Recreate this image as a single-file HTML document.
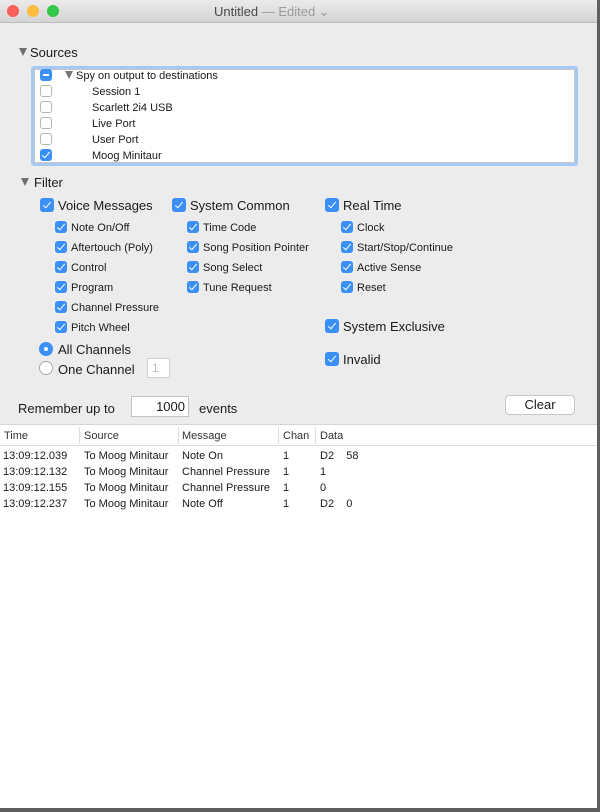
<!DOCTYPE html><html><head><style>
body{margin:0;width:600px;height:812px;background:#5f5f5f;position:relative;overflow:hidden;font-family:"Liberation Sans",sans-serif;color:#1a1a1a}
.a{position:absolute;white-space:nowrap}
#win{position:absolute;left:0;top:0;width:597px;height:808px;background:#ececec;overflow:hidden}
.cb{position:absolute;width:12px;height:12px;border-radius:3px;background:#3b8ff5;}
.cb::after{content:"";position:absolute;left:4px;top:1px;width:3px;height:7px;border:solid #fff;border-width:0 1.5px 1.5px 0;transform:rotate(40deg)}
.cb.b{width:14px;height:14px}
.cb.b::after{left:5px;top:2px;height:7px}
.cb.e{background:#fff;border:1px solid #b5b5b5;width:10px;height:10px}
.cb.e::after,.cb.m::after{display:none}
.s{font-size:11px;margin-top:2px}.l{font-size:13px;margin-top:1px}
.tri{width:0;height:0;border-left:4.5px solid transparent;border-right:4.5px solid transparent;border-top:8px solid #6f6f6f}
</style></head><body>
<div id="win">
<div class="a" style="left:0;top:0;width:597px;height:22px;background:linear-gradient(#ebebeb,#d5d5d5);border-bottom:1px solid #bdbdbd"></div>
<div class="a" style="left:7px;top:5px;width:12px;height:12px;border-radius:50%;background:#fc605b"></div>
<div class="a" style="left:27px;top:5px;width:12px;height:12px;border-radius:50%;background:#fdbc40"></div>
<div class="a" style="left:47px;top:5px;width:12px;height:12px;border-radius:50%;background:#34c84a"></div>
<div class="a" style="left:214px;top:4px;font-size:13px;color:#4a4a4a">Untitled <span style="color:#9a9a9a">— Edited ⌄</span></div>

<div class="a tri" style="left:19px;top:48px"></div>
<div class="a l" style="left:30px;top:44px">Sources</div>
<div class="a" style="left:31px;top:66px;width:541px;height:94px;border:3px solid #a6c8f3;border-radius:3px;background:#fff;box-shadow:inset 0 0 0 1px #c8c8c8"></div>
<div class="a cb m" style="left:40px;top:69px"></div>
<div class="a" style="left:43px;top:74px;width:6px;height:2px;background:#fff"></div>
<div class="a tri" style="left:65px;top:71px;border-top-color:#777"></div>
<div class="a s" style="left:76px;top:68px">Spy on output to destinations</div>
<div class="a cb e" style="left:40px;top:85px"></div><div class="a s" style="left:92px;top:84px">Session 1</div>
<div class="a cb e" style="left:40px;top:101px"></div><div class="a s" style="left:92px;top:100px">Scarlett 2i4 USB</div>
<div class="a cb e" style="left:40px;top:117px"></div><div class="a s" style="left:92px;top:116px">Live Port</div>
<div class="a cb e" style="left:40px;top:133px"></div><div class="a s" style="left:92px;top:132px">User Port</div>
<div class="a cb" style="left:40px;top:149px"></div><div class="a s" style="left:92px;top:148px">Moog Minitaur</div>

<div class="a tri" style="left:21px;top:178px"></div>
<div class="a l" style="left:34px;top:174px">Filter</div>

<div class="a cb b" style="left:40px;top:198px"></div><div class="a l" style="left:58px;top:197px">Voice Messages</div>
<div class="a cb b" style="left:172px;top:198px"></div><div class="a l" style="left:190px;top:197px">System Common</div>
<div class="a cb b" style="left:325px;top:198px"></div><div class="a l" style="left:343px;top:197px">Real Time</div>

<div class="a cb" style="left:55px;top:221px"></div><div class="a s" style="left:71px;top:220px">Note On/Off</div>
<div class="a cb" style="left:55px;top:241px"></div><div class="a s" style="left:71px;top:240px">Aftertouch (Poly)</div>
<div class="a cb" style="left:55px;top:261px"></div><div class="a s" style="left:71px;top:260px">Control</div>
<div class="a cb" style="left:55px;top:281px"></div><div class="a s" style="left:71px;top:280px">Program</div>
<div class="a cb" style="left:55px;top:301px"></div><div class="a s" style="left:71px;top:300px">Channel Pressure</div>
<div class="a cb" style="left:55px;top:321px"></div><div class="a s" style="left:71px;top:320px">Pitch Wheel</div>

<div class="a cb" style="left:187px;top:221px"></div><div class="a s" style="left:203px;top:220px">Time Code</div>
<div class="a cb" style="left:187px;top:241px"></div><div class="a s" style="left:203px;top:240px">Song Position Pointer</div>
<div class="a cb" style="left:187px;top:261px"></div><div class="a s" style="left:203px;top:260px">Song Select</div>
<div class="a cb" style="left:187px;top:281px"></div><div class="a s" style="left:203px;top:280px">Tune Request</div>

<div class="a cb" style="left:341px;top:221px"></div><div class="a s" style="left:357px;top:220px">Clock</div>
<div class="a cb" style="left:341px;top:241px"></div><div class="a s" style="left:357px;top:240px">Start/Stop/Continue</div>
<div class="a cb" style="left:341px;top:261px"></div><div class="a s" style="left:357px;top:260px">Active Sense</div>
<div class="a cb" style="left:341px;top:281px"></div><div class="a s" style="left:357px;top:280px">Reset</div>

<div class="a cb b" style="left:325px;top:319px"></div><div class="a l" style="left:343px;top:318px">System Exclusive</div>
<div class="a cb b" style="left:325px;top:352px"></div><div class="a l" style="left:343px;top:351px">Invalid</div>

<div class="a" style="left:39px;top:342px;width:14px;height:14px;border-radius:50%;background:#3b8ff5"></div>
<div class="a" style="left:44px;top:347px;width:4px;height:4px;border-radius:50%;background:#fff"></div>
<div class="a l" style="left:58px;top:341px">All Channels</div>
<div class="a" style="left:39px;top:361px;width:14px;height:14px;border-radius:50%;background:#fff;border:1px solid #aaa;box-sizing:border-box"></div>
<div class="a l" style="left:58px;top:361px">One Channel</div>
<div class="a" style="left:147px;top:358px;width:23px;height:20px;background:#fff;border:1px solid #cfcfcf;box-sizing:border-box;font-size:12px;color:#bbb;padding:2px 4px">1</div>

<div class="a l" style="left:18px;top:400px">Remember up to</div>
<div class="a" style="left:131px;top:396px;height:21px;background:#fff;border:1px solid #c3c3c3;font-size:13px;text-align:right;padding:2px 3px 0 0;box-sizing:border-box;width:58px">1000</div>
<div class="a l" style="left:199px;top:400px">events</div>
<div class="a" style="left:505px;top:395px;width:70px;height:20px;background:#fff;border:1px solid #c8c8c8;border-radius:4px;box-sizing:border-box;font-size:13px;text-align:center;line-height:18px">Clear</div>

<div class="a" style="left:0;top:424px;width:597px;height:384px;background:#fff;border-top:1px solid #d5d5d5"></div>
<div class="a" style="left:0;top:445px;width:597px;height:1px;background:#dcdcdc"></div>
<div class="a" style="left:79px;top:427px;width:1px;height:17px;background:#ddd"></div>
<div class="a" style="left:178px;top:427px;width:1px;height:17px;background:#ddd"></div>
<div class="a" style="left:278px;top:427px;width:1px;height:17px;background:#ddd"></div>
<div class="a" style="left:315px;top:427px;width:1px;height:17px;background:#ddd"></div>
<div class="a s" style="left:4px;top:428px;color:#333">Time</div>
<div class="a s" style="left:84px;top:428px;color:#333">Source</div>
<div class="a s" style="left:182px;top:428px;color:#333">Message</div>
<div class="a s" style="left:283px;top:428px;color:#333">Chan</div>
<div class="a s" style="left:320px;top:428px;color:#333">Data</div>

<div class="a s" style="left:3px;top:448px">13:09:12.039</div><div class="a s" style="left:84px;top:448px">To Moog Minitaur</div><div class="a s" style="left:182px;top:448px">Note On</div><div class="a s" style="left:283px;top:448px">1</div><div class="a s" style="left:320px;top:448px">D2&nbsp;&nbsp;&nbsp;&nbsp;58</div>
<div class="a s" style="left:3px;top:464px">13:09:12.132</div><div class="a s" style="left:84px;top:464px">To Moog Minitaur</div><div class="a s" style="left:182px;top:464px">Channel Pressure</div><div class="a s" style="left:283px;top:464px">1</div><div class="a s" style="left:320px;top:464px">1</div>
<div class="a s" style="left:3px;top:480px">13:09:12.155</div><div class="a s" style="left:84px;top:480px">To Moog Minitaur</div><div class="a s" style="left:182px;top:480px">Channel Pressure</div><div class="a s" style="left:283px;top:480px">1</div><div class="a s" style="left:320px;top:480px">0</div>
<div class="a s" style="left:3px;top:496px">13:09:12.237</div><div class="a s" style="left:84px;top:496px">To Moog Minitaur</div><div class="a s" style="left:182px;top:496px">Note Off</div><div class="a s" style="left:283px;top:496px">1</div><div class="a s" style="left:320px;top:496px">D2&nbsp;&nbsp;&nbsp;&nbsp;0</div>
</div>
</body></html>
